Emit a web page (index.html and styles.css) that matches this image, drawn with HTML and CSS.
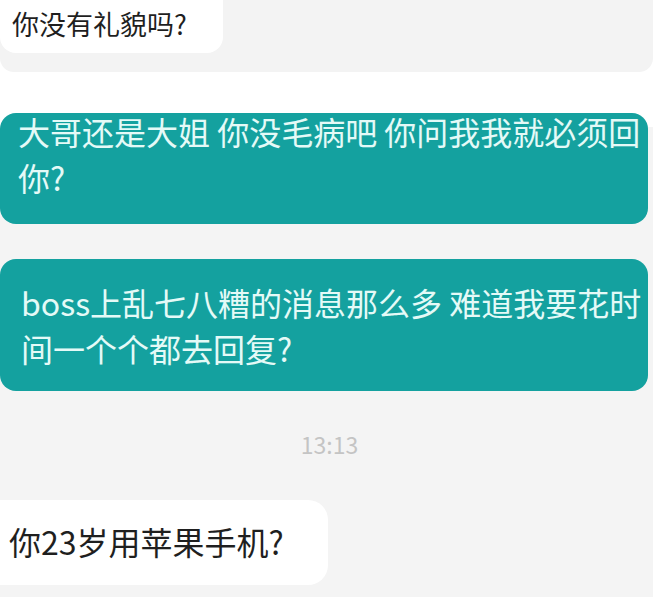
FILE: index.html
```html
<!DOCTYPE html>
<html lang="zh-CN">
<head>
<meta charset="utf-8">
<title>聊天记录</title>
<link rel="stylesheet" href="styles.css">
</head>
<body>
<div class="page">
  <section class="panel-top">
    <div class="bubble bubble-white bubble-first">你没有礼貌吗?</div>
  </section>
  <section class="panel-chat">
    <div class="bubble bubble-teal bubble-cut"><p class="msg-text msg-text-cut">大哥还是大姐 你没毛病吧 你问我我就必须回你?</p></div>
    <div class="bubble bubble-teal bubble-full"><p class="msg-text">boss上乱七八糟的消息那么多 难道我要花时间一个个都去回复?</p></div>
    <div class="timestamp">13:13</div>
    <div class="bubble bubble-white bubble-last">你23岁用苹果手机?</div>
  </section>
</div>
</body>
</html>
```

FILE: styles.css
```css
html, body {
  margin: 0;
  padding: 0;
  background: #ffffff;
}

.page {
  width: 653px;
  height: 597px;
  overflow: hidden;
  font-family: "Noto Sans CJK SC", "Noto Sans", sans-serif;
  display: flex;
  flex-direction: column;
}

.panel-top {
  height: 72px;
  background: #f3f3f3;
  overflow: hidden;
  border-radius: 0 0 14px 14px;
  flex: none;
}

.panel-chat {
  margin-top: 41px;
  flex: 1;
  background: linear-gradient(#ffffff 0, #ffffff 14px, #f4f4f4 14px);
  display: flex;
  flex-direction: column;
  align-items: flex-start;
}

.bubble {
  box-sizing: border-box;
}

.bubble-white {
  background: #ffffff;
  color: #1f1f1f;
}

.bubble-first {
  width: 223px;
  height: 53px;
  padding: 1px 0 0 12px;
  font-size: 27px;
  line-height: 45px;
  border-radius: 0 0 16px 16px;
  white-space: nowrap;
}

.bubble-teal {
  width: 648px;
  background: #14a19f;
  color: #e4faf7;
  font-size: 32px;
  line-height: 46px;
  border-radius: 16px;
  padding-left: 18px;
  padding-right: 4px;
}

.msg-text {
  margin: 0;
}

.msg-text-cut {
  margin-top: -5px;
}

.bubble-cut {
  padding-top: 0;
  padding-bottom: 24px;
}

.bubble-full {
  margin-top: 35px;
  padding-top: 20px;
  padding-bottom: 20px;
  padding-left: 21px;
}

.timestamp {
  align-self: stretch;
  text-align: center;
  margin-top: 38px;
  height: 30px;
  line-height: 30px;
  font-size: 23px;
  color: #c4c4c4;
  padding-left: 6px;
}

.bubble-last {
  margin-top: 41px;
  width: 328px;
  height: 85px;
  padding: 18px 0 0 9px;
  font-size: 32px;
  line-height: 46px;
  border-radius: 0 20px 20px 0;
  white-space: nowrap;
}
```
